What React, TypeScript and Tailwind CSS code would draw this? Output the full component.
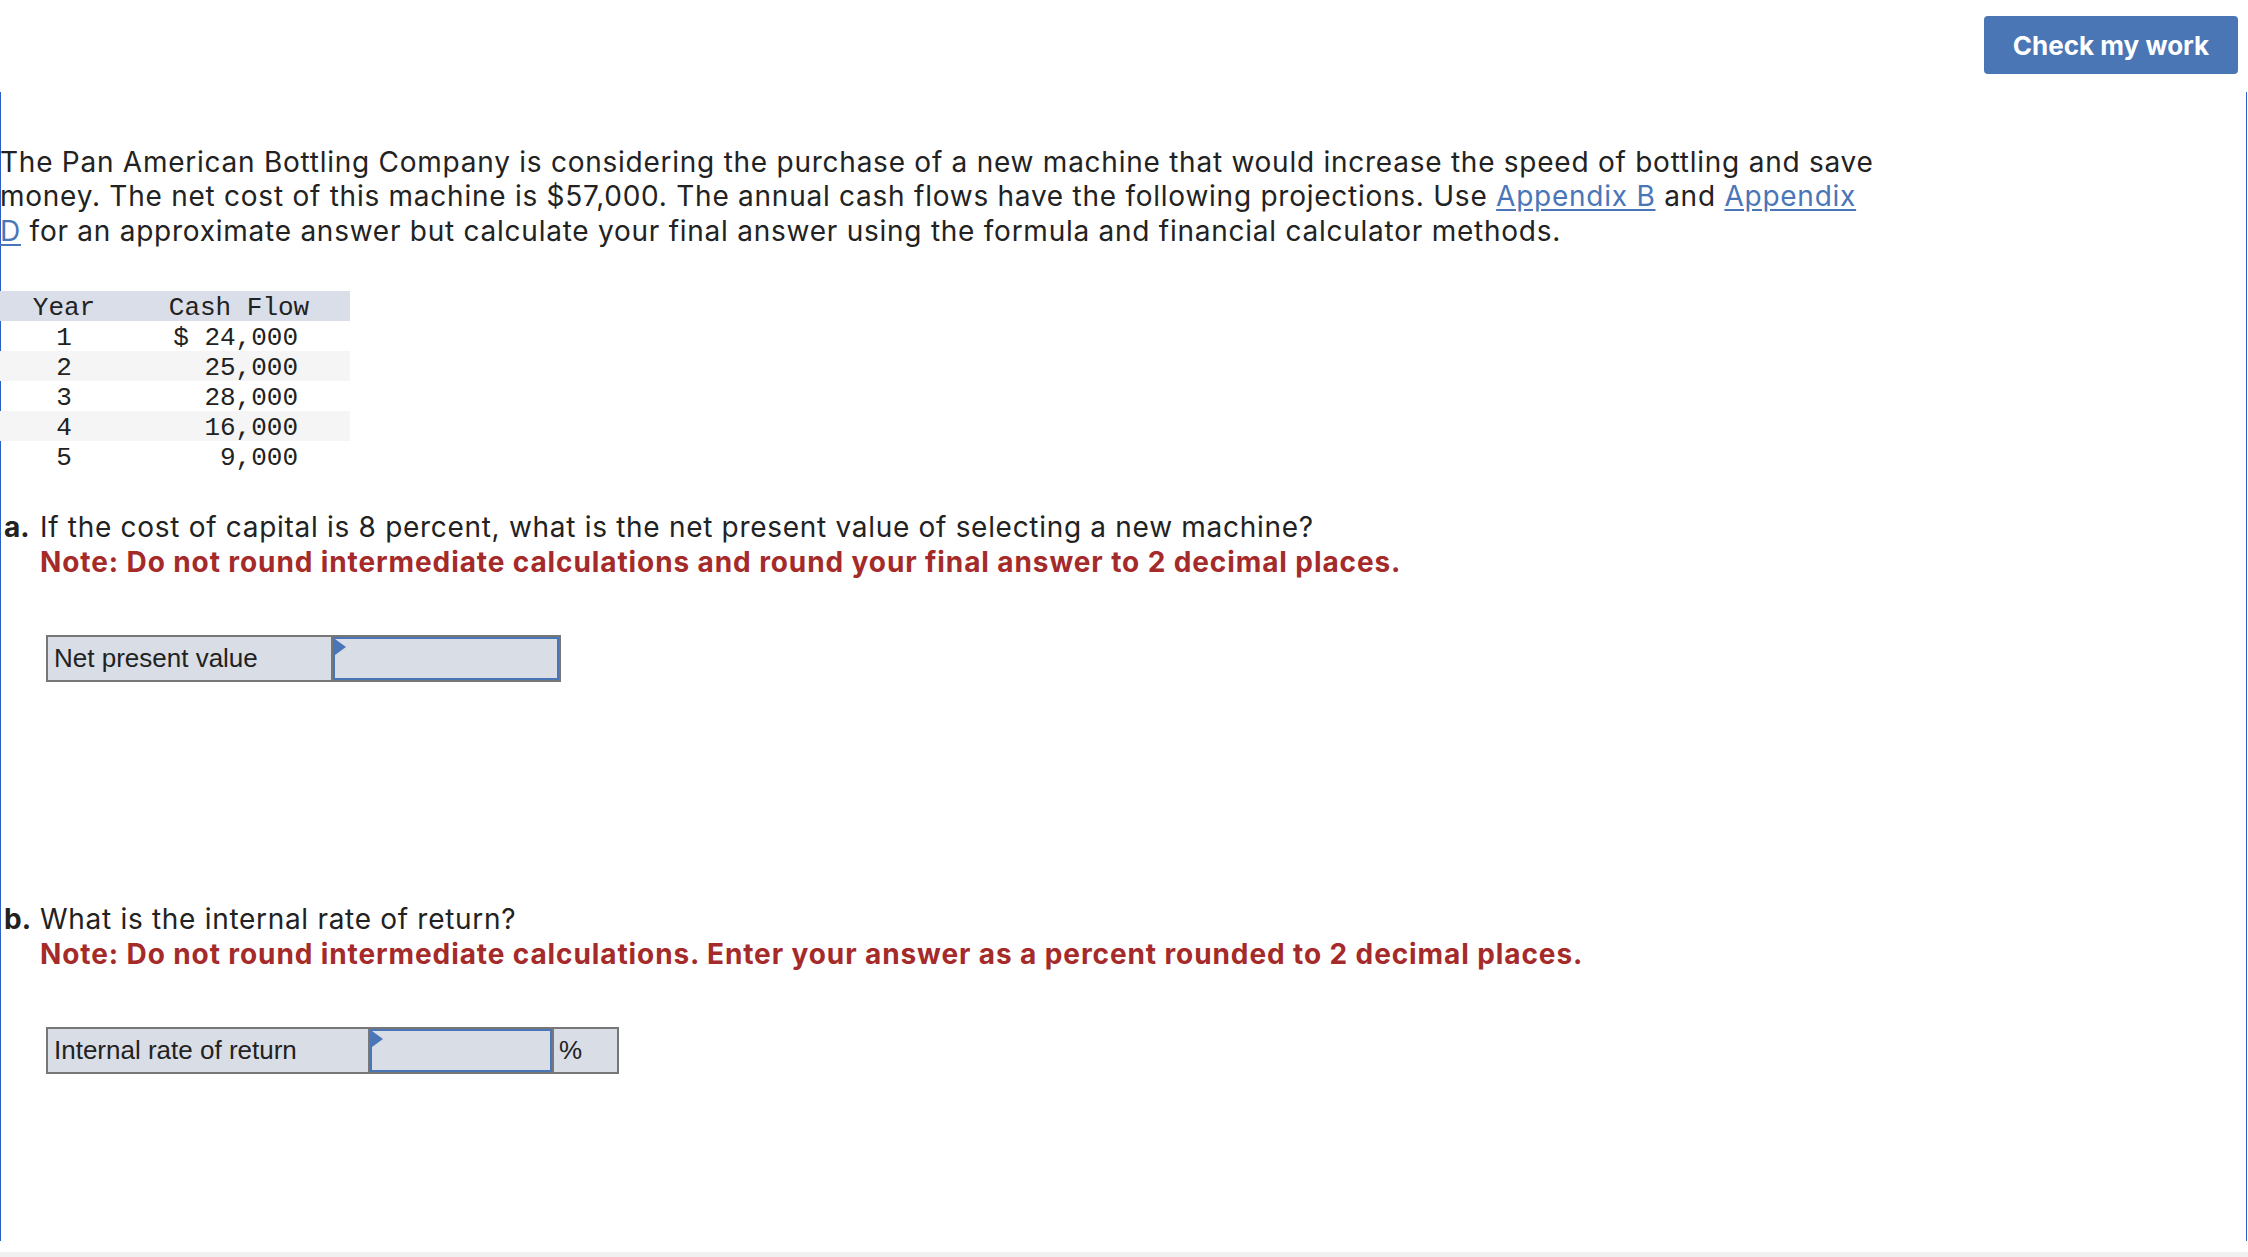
import React from 'react'

const rows = [
  { year: 1, cash: '$ 24,000' },
  { year: 2, cash: '25,000' },
  { year: 3, cash: '28,000' },
  { year: 4, cash: '16,000' },
  { year: 5, cash: '9,000' },
]

function Flag() {
  return (
    <span className="absolute left-0 top-0 h-0 w-0 border-y-[8px] border-l-[11px] border-y-transparent border-l-[#4a76b8]" />
  )
}

export default function App() {
  return (
    <div className="relative h-[1257px] w-full bg-white font-['Inter',sans-serif] text-[#222]">
      {/* top bar */}
      <div className="flex h-[92px] items-start justify-end pr-[10px] pt-[16px]">
        <button className="h-[58px] w-[254px] rounded-[4px] bg-[#4a76b5] text-[26px] font-bold text-white">
          Check my work
        </button>
      </div>

      {/* question body */}
      <div className="mr-[1px] h-[1149px] border-x border-[#2b5fc7]">
        <div className="-ml-px pt-[53px]">
          <p className="w-[2150px] text-[28px] leading-[34.4px] tracking-[0.75px]">
            The Pan American Bottling Company is considering the purchase of a new machine that would increase the speed of bottling and save
            <br />
            money. The net cost of this machine is $57,000. The annual cash flows have the following projections. Use{' '}
            <a className="text-[#4a76b8] underline underline-offset-[3px]">Appendix B</a> and{' '}
            <a className="text-[#4a76b8] underline underline-offset-[3px]">
              Appendix
              <br />D
            </a>{' '}
            for an approximate answer but calculate your final answer using the formula and financial calculator methods.
          </p>

          <table className="mt-[43px] w-[350px] border-collapse font-['Liberation_Mono',monospace] text-[26px] text-[#222]">
            <thead>
              <tr className="h-[30px] bg-[#d9dee8]">
                <th className="w-[128px] p-0 pt-[5px] text-center font-normal leading-[25px]">Year</th>
                <th className="p-0 pt-[5px] text-center font-normal leading-[25px]">Cash Flow</th>
              </tr>
            </thead>
            <tbody>
              {rows.map((r, i) => (
                <tr key={r.year} className={i % 2 === 1 ? 'h-[30px] bg-[#f5f5f5]' : 'h-[30px]'}>
                  <td className="p-0 pt-[5px] text-center leading-[25px]">{r.year}</td>
                  <td className="p-0 pr-[52px] pt-[5px] text-right leading-[25px]">{r.cash}</td>
                </tr>
              ))}
            </tbody>
          </table>

          {/* part a */}
          <div className="mt-[39px] flex text-[28px] leading-[35px] tracking-[0.7px]">
            <span className="w-[40px] shrink-0 pl-[4px] font-bold tracking-normal">a.</span>
            <div>
              <div>If the cost of capital is 8 percent, what is the net present value of selecting a new machine?</div>
              <div className="font-bold tracking-[0.9px] text-[#a52a2a]">
                Note: Do not round intermediate calculations and round your final answer to 2 decimal places.
              </div>
            </div>
          </div>

          <div className="ml-[46px] mt-[55px] flex h-[47px] w-[515px] border-2 border-[#777] bg-[#d9dde6] font-['Liberation_Sans',Arial,sans-serif] text-[26px] text-[#222]">
            <div className="flex w-[285px] items-center border-r-2 border-[#777] pl-[6px]">Net present value</div>
            <div className="relative w-[226px] border-2 border-[#4a76b8]">
              <Flag />
            </div>
          </div>

          {/* part b */}
          <div className="mt-[220px] flex text-[28px] leading-[35px] tracking-[0.7px]">
            <span className="w-[40px] shrink-0 pl-[4px] font-bold tracking-normal">b.</span>
            <div>
              <div>What is the internal rate of return?</div>
              <div className="font-bold tracking-[0.9px] text-[#a52a2a]">
                Note: Do not round intermediate calculations. Enter your answer as a percent rounded to 2 decimal places.
              </div>
            </div>
          </div>

          <div className="ml-[46px] mt-[55px] flex h-[47px] w-[573px] border-2 border-[#777] bg-[#d9dde6] font-['Liberation_Sans',Arial,sans-serif] text-[26px] text-[#222]">
            <div className="flex w-[322px] items-center border-r-2 border-[#777] pl-[6px]">Internal rate of return</div>
            <div className="relative w-[182px] border-2 border-[#4a76b8]">
              <Flag />
            </div>
            <div className="flex w-[65px] items-center border-l-2 border-[#777] pl-[5px]">%</div>
          </div>
        </div>
      </div>

      <div className="absolute bottom-0 left-0 h-[5px] w-full bg-[#f0f0f0]" />
    </div>
  )
}
